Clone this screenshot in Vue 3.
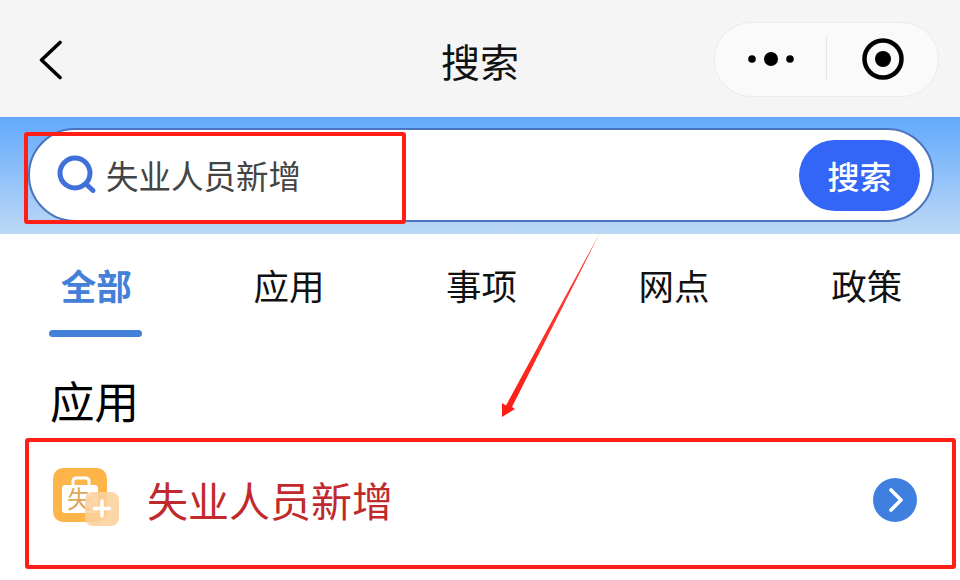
<template>
  <div class="page">
    <header class="nav">
      <svg class="back" width="26" height="42" viewBox="0 0 26 42">
        <path d="M22 4.500 3.500 22 22 39.500" fill="none" stroke="#000" stroke-width="3.600" stroke-linecap="round" stroke-linejoin="round" />
      </svg>
      <h1 class="nav-title">搜索</h1>
      <div class="capsule">
        <div class="capsule-side">
          <svg width="46" height="16" viewBox="0 0 46 16">
            <circle cx="4" cy="8" r="3.800" />
            <circle cx="23" cy="8" r="7" />
            <circle cx="42" cy="8" r="3.800" />
          </svg>
        </div>
        <span class="capsule-line" />
        <div class="capsule-side">
          <svg width="42" height="42" viewBox="0 0 42 42">
            <circle cx="21" cy="21" r="18.500" fill="none" stroke="#000" stroke-width="4.500" />
            <circle cx="21" cy="21" r="8" />
          </svg>
        </div>
      </div>
    </header>

    <div class="search-band">
      <div class="search-bar">
        <svg class="search-icon" width="40" height="40" viewBox="0 0 40 40">
          <circle cx="18" cy="18" r="15" fill="none" stroke="#3f6fd8" stroke-width="5" />
          <path d="M29 29l7 6.500" fill="none" stroke="#3f6fd8" stroke-width="5" stroke-linecap="round" />
        </svg>
        <span class="search-text">失业人员新增</span>
        <button class="search-btn" type="button">搜索</button>
      </div>
    </div>

    <nav class="tabs">
      <div v-for="(tab, index) in tabs" :key="tab" class="tab" :class="{ active: index === 0 }">
        <span>{{ tab }}</span>
      </div>
    </nav>

    <h2 class="section-title">应用</h2>

    <div class="row">
      <svg class="app-icon" width="68" height="60" viewBox="0 0 68 60">
        <rect x="1" y="1" width="54" height="54" rx="10" fill="#fdb54a" />
        <path d="M21 19v-5a3 3 0 0 1 3-3h10a3 3 0 0 1 3 3v5" fill="none" stroke="#fff" stroke-width="3" />
        <rect x="10" y="18" width="36" height="28" rx="3" fill="#fff" />
        <text x="27" y="41" class="app-icon-char">失</text>
        <rect x="33" y="25" width="34" height="34" rx="8" fill="#fbd09a" fill-opacity="0.88" />
        <path d="M50 34v15M42.500 41.500h15" stroke="#fff" stroke-width="3.600" stroke-linecap="round" />
      </svg>
      <span class="row-text">失业人员新增</span>
      <svg class="row-arrow" width="44" height="44" viewBox="0 0 44 44">
        <circle cx="22" cy="22" r="22" fill="#3f7fdf" />
        <path d="M18 12l10 10-10 10" fill="none" stroke="#fff" stroke-width="3.600" stroke-linecap="round" stroke-linejoin="round" />
      </svg>
    </div>

    <!-- red annotations drawn over the screenshot -->
    <div class="mark mark-search" />
    <div class="mark mark-row" />
    <svg class="mark-arrow" width="960" height="580" viewBox="0 0 960 580">
      <defs>
        <linearGradient id="arrowFade" x1="602" y1="228" x2="502" y2="417" gradientUnits="userSpaceOnUse">
          <stop offset="0" stop-color="#ff2a20" stop-opacity="0.25" />
          <stop offset="0.15" stop-color="#ff2a20" stop-opacity="0.9" />
          <stop offset="1" stop-color="#ff1c14" />
        </linearGradient>
      </defs>
      <polygon points="602.500,228 512,407 515,409 502,417 502,403 506,405.500" fill="url(#arrowFade)" />
    </svg>
  </div>
</template>

<script setup>
const tabs = ['全部', '应用', '事项', '网点', '政策']
</script>

<style>
html,
body {
  background: #fff;
  margin: 0;
  overflow: hidden;
}
</style>

<style scoped>
* {
  box-sizing: border-box;
  margin: 0;
  padding: 0;
}

.page {
  background: #fff;
  font-family: "Noto Sans CJK SC", "Noto Sans", sans-serif;
  height: 580px;
  overflow: hidden;
  position: relative;
  width: 960px;
}

.nav {
  align-items: center;
  background: #f5f5f5;
  display: flex;
  height: 117px;
  justify-content: space-between;
  padding: 0 21px 0 38px;
  position: relative;
}

.back {
  margin-top: 1px;
}

.nav-title {
  color: #111;
  font-size: 39px;
  font-weight: 400;
  left: 0;
  line-height: 117px;
  position: absolute;
  right: 0;
  text-align: center;
  top: 2px;
}

.capsule {
  align-items: center;
  background: #fafafa;
  border: 1px solid #ebebeb;
  border-radius: 37px;
  display: flex;
  height: 75px;
  margin-top: 1px;
  position: relative;
  width: 225px;
}

.capsule-side {
  align-items: center;
  display: flex;
  flex: 1;
  justify-content: center;
}

.capsule-side svg {
  fill: #000;
}

.capsule-line {
  background: #e4e4e4;
  height: 44px;
  width: 1px;
}

.search-band {
  background: linear-gradient(180deg, #62a9fc 0%, #bdd9f6 100%);
  height: 117px;
  padding: 11px 26px 12px 28px;
}

.search-bar {
  align-items: center;
  background: #fff;
  border: 2px solid #4a74bd;
  border-radius: 48px;
  display: flex;
  height: 94px;
  padding: 0 12px 0 27px;
}

.search-icon {
  flex-shrink: 0;
}

.search-text {
  color: #444;
  font-size: 32.500px;
  margin-bottom: 2px;
  margin-left: 9px;
}

.search-btn {
  background: #3366f6;
  border: none;
  border-radius: 36px;
  color: #fff;
  font-family: inherit;
  font-size: 32px;
  font-weight: 500;
  height: 71px;
  margin-left: auto;
  width: 121px;
}

.tabs {
  display: grid;
  grid-template-columns: repeat(5, 1fr);
  height: 103px;
  width: 963px;
}

.tab {
  color: #111;
  font-size: 35.500px;
  line-height: 52px;
  padding-top: 25px;
  position: relative;
  text-align: center;
}

.tab.active {
  color: #4480d8;
  font-weight: 700;
}

.tab.active::after {
  background: #4480d8;
  border-radius: 4px;
  bottom: 0;
  content: "";
  height: 7px;
  left: 49px;
  position: absolute;
  width: 93px;
}

.section-title {
  color: #000;
  font-size: 44.500px;
  font-weight: 400;
  line-height: 62px;
  margin-top: 32px;
  padding-left: 50px;
}

.row {
  align-items: center;
  display: flex;
  height: 130px;
  margin: 7px 5px 0 25px;
  padding: 0 38px 0 27px;
}

.app-icon {
  flex-shrink: 0;
  margin-top: -12px;
}

.app-icon-char {
  fill: #dca858;
  font-family: "Liberation Serif", "Noto Sans CJK SC", serif;
  font-size: 24px;
  text-anchor: middle;
}

.row-text {
  color: #c02a2c;
  font-size: 41px;
  margin-bottom: 9px;
  margin-left: 27px;
}

.row-arrow {
  margin-bottom: 6px;
  margin-left: auto;
}

.mark {
  border: 4px solid #ff1f17;
  border-radius: 3px;
  position: absolute;
}

.mark-search {
  height: 92px;
  left: 24px;
  top: 132px;
  width: 382px;
}

.mark-row {
  height: 131px;
  left: 25px;
  top: 438px;
  width: 931px;
}

.mark-arrow {
  left: 0;
  pointer-events: none;
  position: absolute;
  top: 0;
}
</style>
